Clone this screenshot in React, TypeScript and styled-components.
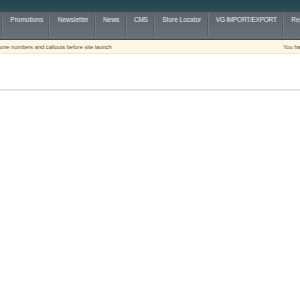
import { createGlobalStyle } from "styled-components";
import styled from "styled-components";

const GlobalStyle = createGlobalStyle`
  html, body {
    margin: 0;
    padding: 0;
    background: #ffffff;
    overflow: hidden;
  }
  body {
    font-family: "Liberation Sans", Arial, sans-serif;
  }
`;

const Page = styled.div`
  width: 300px;
  height: 300px;
  overflow: hidden;
  display: flex;
  flex-direction: column;
`;

const Header = styled.div`
  height: 12px;
  background: linear-gradient(to bottom, #24434a, #2e4f56);
`;

const Nav = styled.div`
  height: 27px;
  border-bottom: 1px solid #3e454a;
  background: linear-gradient(to bottom, #5c656b, #697278);
  display: flex;
  align-items: flex-start;
  padding-left: 2px;
  white-space: nowrap;
  overflow: hidden;
`;

const NavItem = styled.div<{ $caps?: boolean }>`
  flex-shrink: 0;
  height: 22px;
  margin-top: 2px;
  padding: 2px 6.3px 0 7.3px;
  box-sizing: border-box;
  border-left: 1px solid #737b81;
  box-shadow: -1px 0 0 #565e64;
  font-size: 6.5px;
  line-height: 8px;
  letter-spacing: ${(p) => (p.$caps ? "-0.25px" : "0")};
  color: #e6e9eb;
`;

const Notice = styled.div`
  height: 13px;
  background: #fdf6e4;
  border-bottom: 1px solid #f3e6c3;
  display: flex;
  align-items: center;
  font-size: 5.7px;
  color: #4f4f4f;
  white-space: nowrap;
`;

const NoticeText = styled.div`
  flex: 1;
  min-width: 0;
  overflow: hidden;
`;

const NoticeRight = styled.div`
  flex: 0 0 17px;
  overflow: hidden;
`;

const Content = styled.div`
  height: 35px;
`;

const Divider = styled.div`
  height: 1px;
  border-top: 1px solid #dedede;
  background: #ececec;
`;

const items = [
  "Promotions",
  "Newsletter",
  "News",
  "CMS",
  "Store Locator",
  "VG IMPORT/EXPORT",
  "Reports",
];

export default function App() {
  return (
    <Page>
      <GlobalStyle />
      <Header />
      <Nav>
        {items.map((label) => (
          <NavItem key={label} $caps={label === label.toUpperCase()}>
            {label}
          </NavItem>
        ))}
      </Nav>
      <Notice>
        <NoticeText>one numbers and callouts before site launch</NoticeText>
        <NoticeRight>You have</NoticeRight>
      </Notice>
      <Content />
      <Divider />
    </Page>
  );
}
